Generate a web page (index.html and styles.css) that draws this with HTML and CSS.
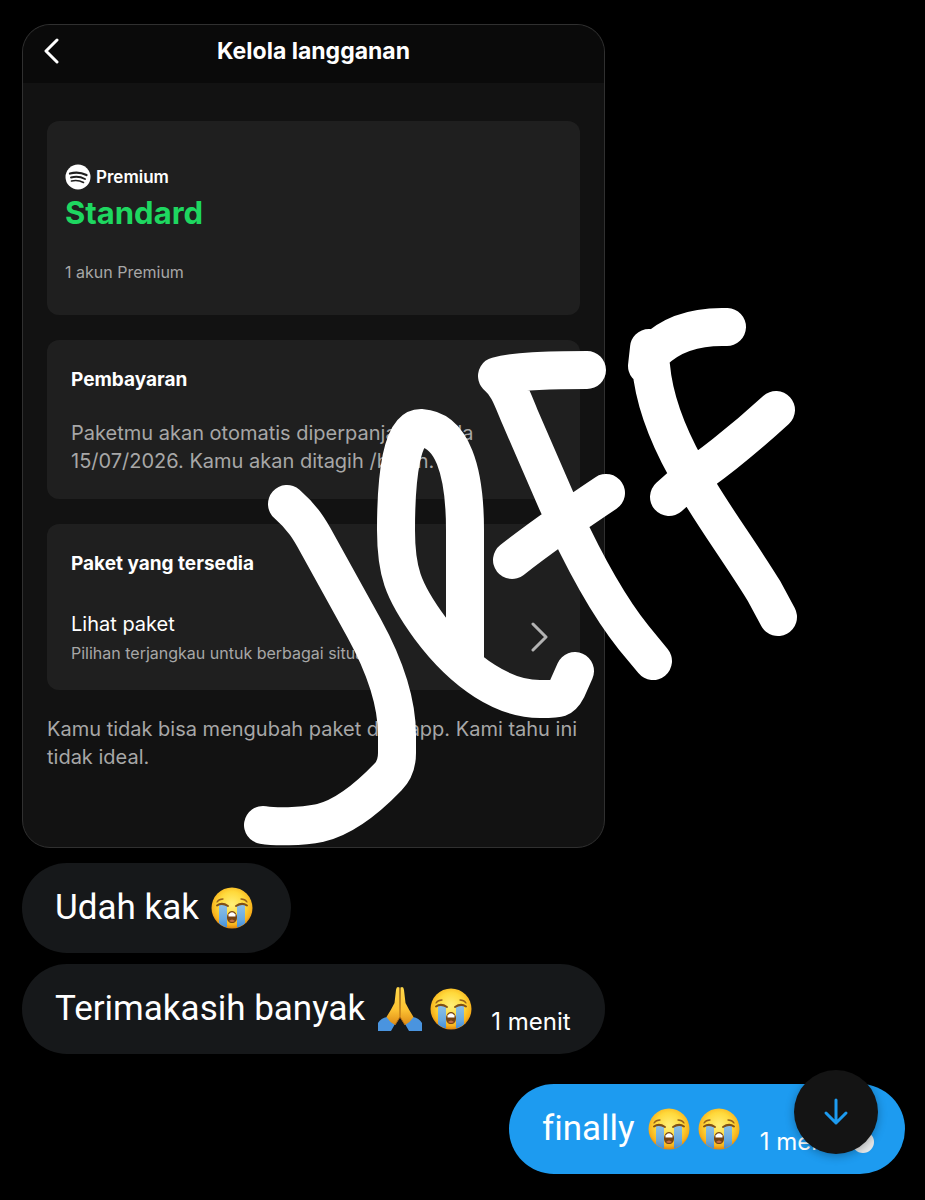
FILE: index.html
```html
<!DOCTYPE html>
<html lang="id">
<head>
  <meta charset="UTF-8" />
  <meta name="viewport" content="width=device-width, initial-scale=1.0"/>
  <title>Chat</title>
  <link rel="stylesheet" href="styles.css">
</head>
<body>
  <!-- shared emoji drawings -->
  <svg class="defs" width="0" height="0" aria-hidden="true">
    <defs>
      <radialGradient id="face" cx="50%" cy="42%" r="58%">
        <stop offset="0" stop-color="#fff07a"/>
        <stop offset="0.55" stop-color="#ffd93b"/>
        <stop offset="0.85" stop-color="#f8b21c"/>
        <stop offset="1" stop-color="#de8410"/>
      </radialGradient>
      <linearGradient id="tear" x1="0" y1="0" x2="0" y2="1">
        <stop offset="0" stop-color="#8cc0e6"/>
        <stop offset="0.6" stop-color="#68a9df"/>
        <stop offset="1" stop-color="#3987d9"/>
      </linearGradient>
      <linearGradient id="hand" x1="0" y1="0" x2="0" y2="1">
        <stop offset="0" stop-color="#ffd84a"/>
        <stop offset="0.6" stop-color="#fcc232"/>
        <stop offset="1" stop-color="#dd8a16"/>
      </linearGradient>
      <clipPath id="round"><circle cx="21" cy="21" r="20"/></clipPath>
      <symbol id="cry" viewBox="0 0 42 42">
        <circle cx="21" cy="21" r="20.5" fill="url(#face)"/>
        <g clip-path="url(#round)">
          <path d="M8 18h8v24H8zM26 18h8v24h-8z" fill="url(#tear)"/>
        </g>
        <path d="M6 18.500q5-3.500 11 .5M25 19q6-4 11-.5" fill="none" stroke="#805016" stroke-width="2" stroke-linecap="round"/>
        <path d="M6 15q2-3 6-3M36 15q-2-3-6-3" fill="none" stroke="#95601c" stroke-width="1.300" stroke-linecap="round"/>
        <path d="M21 24c3 0 5 3 5 6.500s-2 5.500-5 5.500-5-2-5-5.500 2-6.500 5-6.500z" fill="#764312"/>
        <path d="M17.500 27.500q3.500-4.500 7 0v2h-7z" fill="#fff"/>
        <path d="M18 34q3-3 6 0-3 2-6 0z" fill="#c96f45"/>
      </symbol>
      <symbol id="pray" viewBox="0 0 46 46">
        <path d="M1 37q3-5 9-6l8 7-4 7H1zM45 37q-3-5-9-6l-8 7 4 7h13z" fill="#4a94df"/>
        <path d="M22.500 1.500q-3-2-3.500 2.500l-1.500 13Q14 24 9.500 31q3 5 8.500 8l5-8z" fill="url(#hand)"/>
        <path d="M23.500 1.500q3-2 3.500 2.500l1.500 13Q32 24 36.500 31q-3 5-8.500 8l-5-8z" fill="url(#hand)"/>
        <path d="M23 3v28l-5 8M23 31l5 8" fill="none" stroke="#b96e13" stroke-width="1"/>
      </symbol>
    </defs>
  </svg>

  <main class="chat">
    <article class="shot">
      <header class="shot-header">
        <button class="back" aria-label="Kembali">
          <svg width="16" height="28" viewBox="0 0 16 28"><path d="M14 3 3 14l11 11"/></svg>
        </button>
        <h1>Kelola langganan</h1>
      </header>

      <div class="shot-body">
        <section class="card plan">
          <div class="brand">
            <svg width="26" height="26" viewBox="0 0 26 26" aria-hidden="true">
              <circle cx="13" cy="13" r="12.500" fill="#fff"/>
              <path d="M5 9.500q8.500-2.500 16.500 1.500" stroke-width="2.300"/>
              <path d="M6 13.500q7.500-2 14 1.500" stroke-width="1.900"/>
              <path d="M6.500 17q6.500-1.500 12 1.500" stroke-width="1.600"/>
            </svg>
            <span>Premium</span>
          </div>
          <h2 class="plan-name">Standard</h2>
          <p class="small">1 akun Premium</p>
        </section>

        <section class="card">
          <h3>Pembayaran</h3>
          <p class="text">Paketmu akan otomatis diperpanjang pada<br>15/07/2026. Kamu akan ditagih /bulan.</p>
        </section>

        <section class="card packages">
          <h3>Paket yang tersedia</h3>
          <a class="package-link" href="#">
            <span>
              <span class="package-title">Lihat paket</span>
              <span class="small">Pilihan terjangkau untuk berbagai situasi</span>
            </span>
            <svg width="18" height="30" viewBox="0 0 18 30" aria-hidden="true"><path d="M2 2l13 13L2 28"/></svg>
          </a>
        </section>

        <p class="text">Kamu tidak bisa mengubah paket dari app. Kami tahu ini tidak ideal.</p>
      </div>

      <!-- marker drawing -->
      <svg class="marker" width="560" height="545" viewBox="240 305 560 545" aria-hidden="true">
        <path d="M287 504C303 518 310 530 317 543L364 628C386 668 397 705 397 735L397 753Q397 768 388 777C363 803 341 818 320 823C300 827 275 827 263 825"/>
        <path d="M465 665L465 530C465 470 452 430 421 428C402 428 396 475 396 530C396 570 402 590 430 628C465 675 505 699 540 699C560 699 562 699 567 689L575 671"/>
        <path d="M587 370C545 370 516 371 497 376C508 385 512 398 520 417L556 500C580 554 605 602 634 638L653 661M512 560C535 542 555 527 606 493"/>
        <path d="M727 327C695 326 670 335 653 352L649 348L647 366L651 366C654 400 666 432 686 468C703 502 737 547 764 591L778 617M776 410C740 443 705 470 687 481L669 497"/>
      </svg>
    </article>

    <div class="bubble first">
      <span>Udah kak</span>
      <svg class="emoji" role="img" aria-label="😭"><use href="#cry"/></svg>
    </div>

    <div class="bubble">
      <span>Terimakasih banyak</span>
      <svg class="emoji wide" role="img" aria-label="🙏"><use href="#pray"/></svg>
      <svg class="emoji" role="img" aria-label="😭"><use href="#cry"/></svg>
      <time>1 menit</time>
    </div>

    <div class="bubble own">
      <span>finally</span>
      <svg class="emoji" role="img" aria-label="😭"><use href="#cry"/></svg>
      <svg class="emoji" role="img" aria-label="😭"><use href="#cry"/></svg>
      <time>1 menit</time>
      <span class="status"></span>
      <button class="scroll-down" aria-label="Ke bawah">
        <svg width="26" height="28" viewBox="0 0 26 28"><path d="M13 2v23M3 15l10 10 10-10"/></svg>
      </button>
    </div>
  </main>
</body>
</html>
```
FILE: styles.css
```css
* {
  box-sizing: border-box;
}

body {
  margin: 0;
  min-height: 100vh;
  background: #000;
  color: #fff;
  font-family: Inter, "Liberation Sans", sans-serif;
}

h1,
h2,
h3,
p {
  margin: 0;
}

button {
  padding: 0;
  border: none;
  background: none;
  cursor: pointer;
}

svg {
  display: block;
  flex: none;
}

.defs {
  position: absolute;
}

.chat {
  display: flex;
  flex-direction: column;
  align-items: flex-start;
  gap: 11px;
  padding: 24px 20px 24px 22px;
}

/* Subscription screenshot */
.shot {
  position: relative;
  width: 100%;
  max-width: 583px;
  border: 1px solid #303030;
  border-radius: 28px;
  background: #121212;
}

.shot-header {
  display: grid;
  grid-template-columns: 40px 1fr 40px;
  align-items: center;
  height: 58px;
  padding: 0 20px 6px;
  border-radius: 28px 28px 0 0;
  background: #0a0a0a;
}

.shot-header h1 {
  font-size: 23px;
  line-height: 28px;
  font-weight: 700;
  text-align: center;
}

.back path,
.package-link path,
.scroll-down path {
  fill: none;
  stroke: #fff;
  stroke-width: 3;
  stroke-linecap: round;
  stroke-linejoin: round;
}

.shot-body {
  display: flex;
  flex-direction: column;
  gap: 25px;
  padding: 38px 24px 76px;
}

.card {
  padding: 24px;
  border-radius: 12px;
  background: #1f1f1f;
}

.plan {
  padding: 42px 18px 31px;
}

.brand {
  display: flex;
  align-items: center;
  gap: 5px;
  font-size: 17px;
  line-height: 28px;
  font-weight: 600;
}

.brand path {
  fill: none;
  stroke: #1f1f1f;
  stroke-linecap: round;
}

.plan-name {
  margin-bottom: 25px;
  color: #1ed760;
  font-size: 31px;
  line-height: 44px;
  font-weight: 700;
}

.small {
  display: block;
  color: #a7a7a7;
  font-size: 16px;
  line-height: 24px;
}

.card h3 {
  margin-bottom: 23px;
  font-size: 19px;
  line-height: 32px;
  font-weight: 700;
}

.card.packages h3 {
  margin-bottom: 28px;
}

.text {
  color: #a7a7a7;
  font-size: 20px;
  line-height: 28px;
}

.package-link {
  display: flex;
  align-items: center;
  justify-content: space-between;
  padding-right: 7px;
  color: #fff;
  text-decoration: none;
}

.package-title {
  display: block;
  font-size: 20px;
  line-height: 32px;
}

.package-link .small {
  line-height: 26px;
}

.package-link path {
  stroke: #b3b3b3;
}

.marker {
  position: absolute;
  top: 280px;
  left: 217px;
  z-index: 1;
  pointer-events: none;
}

.marker path {
  fill: none;
  stroke: #fff;
  stroke-width: 38;
  stroke-linecap: round;
  stroke-linejoin: round;
}

/* Messages */
.bubble {
  display: flex;
  align-items: center;
  gap: 7px;
  min-height: 90px;
  padding: 0 34px 0 33px;
  border-radius: 45px;
  background: #16181a;
  font-family: Roboto, "Liberation Sans", sans-serif;
  font-size: 35px;
  line-height: 44px;
  font-variant-ligatures: none;
}

.bubble > span:first-child {
  margin-right: 5px;
}

.first {
  margin-top: 4px;
  padding-right: 38px;
}

.emoji {
  width: 42px;
  height: 42px;
}

.emoji.wide {
  width: 46px;
  height: 46px;
}

.bubble time {
  align-self: flex-end;
  margin: 0 0 17px 12px;
  font-family: Inter, "Liberation Sans", sans-serif;
  font-size: 24px;
  line-height: 30px;
}

.own {
  position: relative;
  align-self: flex-end;
  gap: 8px;
  margin-top: 19px;
  padding-right: 31px;
  background: #1d9bf0;
}

.status {
  align-self: flex-end;
  width: 22px;
  height: 22px;
  margin: 0 0 21px 5px;
  border-radius: 50%;
  background: #e7e9ea;
}

.scroll-down {
  position: absolute;
  top: -14px;
  right: 27px;
  display: grid;
  place-items: center;
  width: 84px;
  height: 84px;
  border-radius: 50%;
  background: #141414;
  box-shadow: 0 2px 10px rgba(0, 0, 0, 0.3);
}

.scroll-down path {
  stroke: #1d9bf0;
}
```
